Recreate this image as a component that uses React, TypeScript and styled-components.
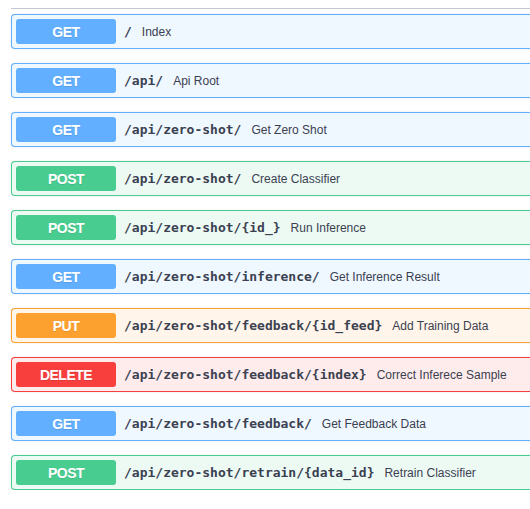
import React from "react";
import styled, { createGlobalStyle } from "styled-components";

type Method = "GET" | "POST" | "PUT" | "DELETE";

const methodColors: Record<Method, { main: string; bg: string }> = {
  GET: { main: "#61affe", bg: "#eff7ff" },
  POST: { main: "#49cc90", bg: "#edfaf4" },
  PUT: { main: "#fca130", bg: "#fff5ea" },
  DELETE: { main: "#f93e3e", bg: "#feebeb" },
};

const operations: { method: Method; path: string; summary: string }[] = [
  { method: "GET", path: "/", summary: "Index" },
  { method: "GET", path: "/api/", summary: "Api Root" },
  { method: "GET", path: "/api/zero-shot/", summary: "Get Zero Shot" },
  { method: "POST", path: "/api/zero-shot/", summary: "Create Classifier" },
  { method: "POST", path: "/api/zero-shot/{id_}", summary: "Run Inference" },
  { method: "GET", path: "/api/zero-shot/inference/", summary: "Get Inference Result" },
  { method: "PUT", path: "/api/zero-shot/feedback/{id_feed}", summary: "Add Training Data" },
  { method: "DELETE", path: "/api/zero-shot/feedback/{index}", summary: "Correct Inferece Sample" },
  { method: "GET", path: "/api/zero-shot/feedback/", summary: "Get Feedback Data" },
  { method: "POST", path: "/api/zero-shot/retrain/{data_id}", summary: "Retrain Classifier" },
];

const App = () => {
  return (
    <>
      <GlobalStyle />
      <Section>
        {operations.map((op, i) => (
          <OpBlock key={i} method={op.method}>
            <MethodBadge method={op.method}>{op.method}</MethodBadge>
            <Path>{op.path}</Path>
            <Summary>{op.summary}</Summary>
          </OpBlock>
        ))}
      </Section>
    </>
  );
};

export default App;

const GlobalStyle = createGlobalStyle`
  body {
    margin: 0;
    background: #ffffff;
    font-family: "Liberation Sans", Arial, sans-serif;
  }
`;

// the list continues past the right edge of the window, so no right border
const Section = styled.div`
  margin: 8px 0 0 11px;
  padding-top: 5px;
  border-top: 1px solid #c3c7cf;
  display: flex;
  flex-direction: column;
  gap: 14px;
`;

const OpBlock = styled.div<{ method: Method }>`
  display: flex;
  align-items: center;
  height: 35px;
  box-sizing: border-box;
  padding: 4px;
  border: 1px solid ${({ method }) => methodColors[method].main};
  border-right: none;
  border-radius: 4px 0 0 4px;
  background-color: ${({ method }) => methodColors[method].bg};
  box-shadow: 0 0 2px rgba(0, 0, 0, 0.12);
  overflow: hidden;
`;

const MethodBadge = styled.div<{ method: Method }>`
  flex: none;
  width: 100px;
  height: 25px;
  display: flex;
  align-items: center;
  justify-content: center;
  border-radius: 3px;
  background-color: ${({ method }) => methodColors[method].main};
  color: #ffffff;
  font-family: "Liberation Sans", Arial, sans-serif;
  font-weight: 700;
  font-size: 14px;
  letter-spacing: -0.5px;
  text-shadow: 0 1px 0 rgba(0, 0, 0, 0.1);
`;

const Path = styled.span`
  margin-left: 8px;
  font-family: "DejaVu Sans Mono", "Liberation Mono", monospace;
  font-weight: 700;
  font-size: 13px;
  color: #3b4151;
  white-space: nowrap;
`;

const Summary = styled.span`
  margin-left: 10px;
  font-family: "Liberation Sans", Arial, sans-serif;
  font-size: 12px;
  color: #3b4151;
  white-space: nowrap;
`;
